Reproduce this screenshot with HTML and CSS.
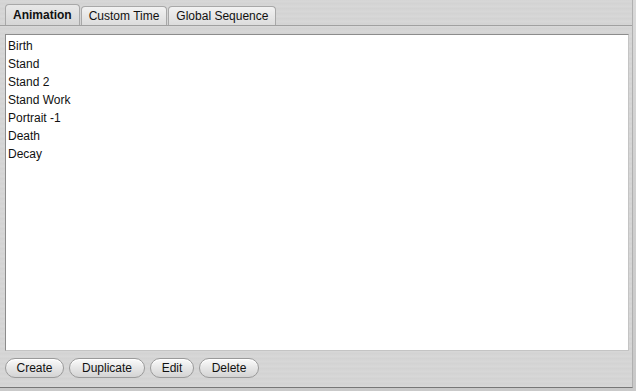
FILE: index.html
```html
<!DOCTYPE html>
<html lang="en">
<head>
    <meta charset="UTF-8">
    <title>Animation Sequences</title>
    <link rel="stylesheet" href="styles.css">
</head>
<body>
    <div class="window">
        <div class="tabs">
            <div class="tab active">Animation</div>
            <div class="tab">Custom Time</div>
            <div class="tab">Global Sequence</div>
        </div>
        <div class="panel">
            <ul class="list">
                <li>Birth</li>
                <li>Stand</li>
                <li>Stand 2</li>
                <li>Stand Work</li>
                <li>Portrait -1</li>
                <li>Death</li>
                <li>Decay</li>
            </ul>
            <div class="buttons">
                <button class="btn btn-create">Create</button>
                <button class="btn btn-dup">Duplicate</button>
                <button class="btn btn-edit">Edit</button>
                <button class="btn btn-del">Delete</button>
            </div>
        </div>
    </div>
</body>
</html>
```

FILE: styles.css
```css
body {
    margin: 0;
    width: 636px;
    height: 391px;
    overflow: hidden;
    font-family: "Liberation Sans", Arial, sans-serif;
    font-size: 12px;
    color: #111;
    background: linear-gradient(180deg, #d9d9d9 0%, #cfcfcf 50%, #c9c9c9 100%);
}
.window {
    height: 388px;
    border-bottom: 1px solid #777;
    border-right: 1px solid #b0b0b0;
    box-sizing: border-box;
    width: 633px;
    display: flex;
    flex-direction: column;
    background: repeating-linear-gradient(180deg, #d5d5d5 0px, #d8d8d8 2px, #d2d2d2 3px, #d5d5d5 5px);
}
.tabs {
    display: flex;
    padding: 5px 0 0 5px;
    height: 20px;
    align-items: flex-end;
    border-bottom: 1px solid #a0a0a0;
}
.tab {
    height: 18px;
    line-height: 18px;
    padding: 0 7px;
    margin-right: 1px;
    border: 1px solid #a8a8a8;
    border-bottom: none;
    border-radius: 4px 4px 0 0;
    background: linear-gradient(180deg, #f2f2f2, #dcdcdc);
}
.tab.active {
    height: 20px;
    line-height: 21px;
    font-weight: bold;
    background: linear-gradient(180deg, #e8e8e8, #d6d6d6);
}
.panel {
    flex: 1;
    display: flex;
    flex-direction: column;
    padding: 8px 3px 0 5px;
}
.list {
    flex: 1;
    margin: 0;
    padding: 2px 0 0 2px;
    list-style: none;
    background: #fff;
    border: 1px solid #8c8c8c;
    border-right-color: #c4c4c4;
    border-bottom-color: #c4c4c4;
}
.list li {
    height: 18px;
    line-height: 18px;
}
.buttons {
    display: flex;
    gap: 5px;
    padding: 7px 0 9px;
}
.btn {
    font-family: "Liberation Sans", Arial, sans-serif;
    font-size: 12px;
    color: #111;
    height: 20px;
    padding: 0 8px;
    border: 1px solid #9a9a9a;
    border-radius: 10px;
    background: linear-gradient(180deg, #fbfbfb 0%, #e6e6e6 50%, #d4d4d4 100%);
    box-shadow: inset 0 1px 0 #fff;
}
.btn-create { width: 59px; }
.btn-dup { width: 76px; }
.btn-edit { width: 44px; }
.btn-del { width: 60px; }
```
